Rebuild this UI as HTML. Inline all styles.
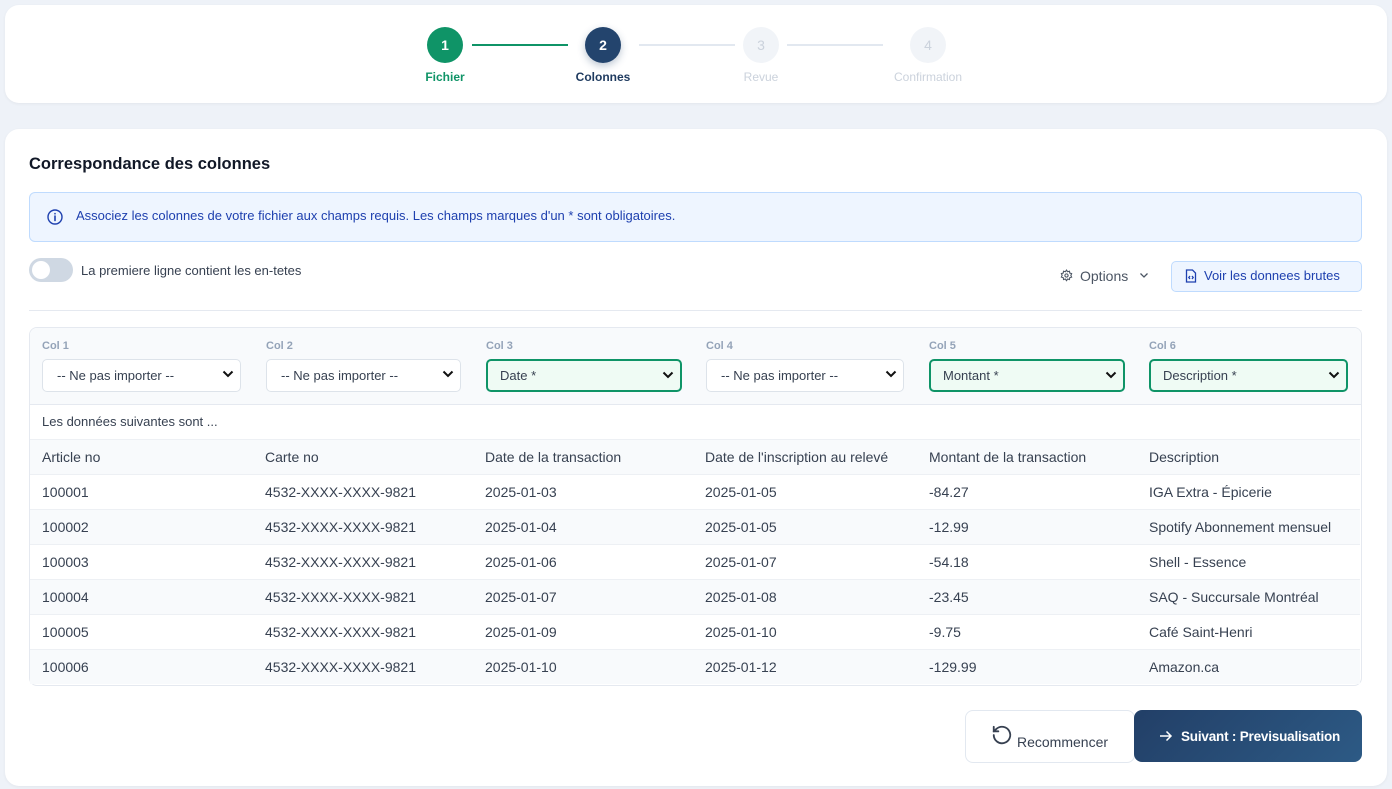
<!DOCTYPE html>
<html><head><meta charset="utf-8"><style>
*{box-sizing:border-box;margin:0;padding:0}
body{width:1392px;height:789px;background:#eef2f8;font-family:"Liberation Sans",sans-serif;color:#1f2937;position:relative;overflow:hidden}
.card{position:absolute;left:5px;width:1382px;background:#fff;border-radius:14px;box-shadow:0 1px 3px rgba(0,0,0,.05)}
.step{position:absolute;top:27px;width:36px;height:36px;border-radius:50%;color:#fff;font-weight:bold;font-size:14px;text-align:center;line-height:36px}
.lbl{position:absolute;top:70px;font-size:12px;font-weight:bold;text-align:center;width:120px}
.line{position:absolute;top:44px;height:2px}
.abs{position:absolute}
.sel{position:absolute;top:359px;height:33px;border:1.5px solid #dde3ea;border-radius:5px;background:#fff;font-size:13px;padding-left:14px;line-height:31px;color:#374151}
.sel.g{border:2px solid #0f9467;background:#effbf4;line-height:30px;padding-left:12px}
.sel svg{position:absolute;right:6px;top:10px}
.cl{position:absolute;top:340px;font-size:11px;font-weight:bold;color:#94a3b8}
.row{position:absolute;left:30px;width:1330px;height:35px;font-size:14px;line-height:35px;border-top:1px solid #edf0f4;color:#374151}
.row span{position:absolute}
.sh{background:#f8fafc}
</style></head><body>
<div class="card" style="top:5px;height:98px">
</div>
<div class="line" style="left:472px;width:96px;background:#0f9467"></div>
<div class="line" style="left:639px;width:96px;background:#e2e8f0"></div>
<div class="line" style="left:787px;width:96px;background:#e2e8f0"></div>
<div class="step" style="left:427px;background:#0f9467">1</div>
<div class="step" style="left:585px;background:#23446d;box-shadow:0 3px 8px rgba(35,68,109,.3)">2</div>
<div class="step" style="left:743px;background:#f1f4f8;color:#cbd2dc;font-weight:normal">3</div>
<div class="step" style="left:910px;background:#f1f4f8;color:#cbd2dc;font-weight:normal">4</div>
<div class="lbl" style="left:385px;color:#0f9467">Fichier</div>
<div class="lbl" style="left:543px;color:#1e3a5f">Colonnes</div>
<div class="lbl" style="left:701px;color:#cbd2dc;font-weight:normal">Revue</div>
<div class="lbl" style="left:868px;color:#cbd2dc;font-weight:normal">Confirmation</div>

<div class="card" style="top:129px;height:657px"></div>
<div class="abs" style="left:29px;top:155px;font-size:16.5px;font-weight:bold;color:#111827">Correspondance des colonnes</div>
<div class="abs" style="left:29px;top:192px;width:1333px;height:50px;background:#eef5ff;border:1px solid #bfdbfe;border-radius:6px"></div>
<svg class="abs" style="left:46px;top:208px" width="18" height="18" viewBox="0 0 18 18"><circle cx="9" cy="9" r="7" fill="none" stroke="#1e40af" stroke-width="1.4"/><path d="M9 8v4.5M9 5.6v.2" stroke="#1e40af" stroke-width="1.6" stroke-linecap="round"/></svg>
<div class="abs" style="left:76px;top:208px;font-size:13px;color:#1e40af">Associez les colonnes de votre fichier aux champs requis. Les champs marques d'un * sont obligatoires.</div>
<div class="abs" style="left:29px;top:258px;width:44px;height:24px;border-radius:12px;background:#cfd8e3"></div>
<div class="abs" style="left:32px;top:261px;width:18px;height:18px;border-radius:50%;background:#fff"></div>
<div class="abs" style="left:81px;top:263px;font-size:13px;color:#374151">La premiere ligne contient les en-tetes</div>
<svg class="abs" style="left:1060px;top:269px" width="13" height="13" viewBox="0 0 24 24" fill="none" stroke="#4b5563" stroke-width="2"><circle cx="12" cy="12" r="3"/><path d="M12 2l2 3 3.5-1 .5 3.5 3.5 1-1.5 3.5 1.5 3-3.5 1-.5 3.5-3.5-1-2 3-2-3-3.5 1-.5-3.5-3.5-1 1.5-3.5L2.5 8.5 6 7.5 6.5 4 10 5z"/></svg>
<div class="abs" style="left:1080px;top:268px;font-size:14px;color:#4b5563">Options</div>
<svg class="abs" style="left:1139px;top:272px" width="10" height="7" viewBox="0 0 10 7"><path d="M1.5 1.5l3.5 3.5 3.5-3.5" fill="none" stroke="#4b5563" stroke-width="1.3"/></svg>
<div class="abs" style="left:1171px;top:261px;width:191px;height:31px;background:#eef5ff;border:1px solid #bfdbfe;border-radius:5px"></div>
<svg class="abs" style="left:1185px;top:269px" width="12" height="14" viewBox="0 0 12 14" fill="none" stroke="#1e40af" stroke-width="1.3"><path d="M1.5 1h6l3 3v9h-9z"/><path d="M5 7l-1.2 1.5L5 10M7 7l1.2 1.5L7 10"/></svg>
<div class="abs" style="left:1204px;top:268px;font-size:13px;color:#1e40af">Voir les donnees brutes</div>
<div class="abs" style="left:29px;top:310px;width:1333px;height:1px;background:#e5e9f0"></div>

<div class="abs" style="left:29px;top:327px;width:1333px;height:359px;border:1px solid #e5e9f0;border-radius:8px;overflow:hidden;background:#fff">
<div style="height:77px;background:#f8fafc;border-bottom:1px solid #e5e9f0"></div>
</div>
<div class="cl" style="left:42px">Col 1</div><div class="cl" style="left:266px">Col 2</div><div class="cl" style="left:486px">Col 3</div><div class="cl" style="left:706px">Col 4</div><div class="cl" style="left:929px">Col 5</div><div class="cl" style="left:1149px">Col 6</div>
<div class="sel" style="left:42px;width:199px">-- Ne pas importer --<svg width="12" height="8"><path d="M1.5 1.5l4.5 4.5 4.5-4.5" fill="none" stroke="#111" stroke-width="2"/></svg></div>
<div class="sel" style="left:266px;width:195px">-- Ne pas importer --<svg width="12" height="8"><path d="M1.5 1.5l4.5 4.5 4.5-4.5" fill="none" stroke="#111" stroke-width="2"/></svg></div>
<div class="sel g" style="left:486px;width:196px">Date *<svg width="12" height="8"><path d="M1.5 1.5l4.5 4.5 4.5-4.5" fill="none" stroke="#111" stroke-width="2"/></svg></div>
<div class="sel" style="left:706px;width:198px">-- Ne pas importer --<svg width="12" height="8"><path d="M1.5 1.5l4.5 4.5 4.5-4.5" fill="none" stroke="#111" stroke-width="2"/></svg></div>
<div class="sel g" style="left:929px;width:196px">Montant *<svg width="12" height="8"><path d="M1.5 1.5l4.5 4.5 4.5-4.5" fill="none" stroke="#111" stroke-width="2"/></svg></div>
<div class="sel g" style="left:1149px;width:199px">Description *<svg width="12" height="8"><path d="M1.5 1.5l4.5 4.5 4.5-4.5" fill="none" stroke="#111" stroke-width="2"/></svg></div>

<div class="row" style="top:404px;border-top:none;font-size:13px"><span style="left:12px">Les données suivantes sont ...</span></div>
<div class="row sh" style="top:439px"><span style="left:12px">Article no</span><span style="left:235px">Carte no</span><span style="left:455px">Date de la transaction</span><span style="left:675px">Date de l'inscription au relevé</span><span style="left:899px">Montant de la transaction</span><span style="left:1119px">Description</span></div>
<div class="row" style="top:474px"><span style="left:12px">100001</span><span style="left:235px">4532-XXXX-XXXX-9821</span><span style="left:455px">2025-01-03</span><span style="left:675px">2025-01-05</span><span style="left:899px">-84.27</span><span style="left:1119px">IGA Extra - Épicerie</span></div>
<div class="row sh" style="top:509px"><span style="left:12px">100002</span><span style="left:235px">4532-XXXX-XXXX-9821</span><span style="left:455px">2025-01-04</span><span style="left:675px">2025-01-05</span><span style="left:899px">-12.99</span><span style="left:1119px">Spotify Abonnement mensuel</span></div>
<div class="row" style="top:544px"><span style="left:12px">100003</span><span style="left:235px">4532-XXXX-XXXX-9821</span><span style="left:455px">2025-01-06</span><span style="left:675px">2025-01-07</span><span style="left:899px">-54.18</span><span style="left:1119px">Shell - Essence</span></div>
<div class="row sh" style="top:579px"><span style="left:12px">100004</span><span style="left:235px">4532-XXXX-XXXX-9821</span><span style="left:455px">2025-01-07</span><span style="left:675px">2025-01-08</span><span style="left:899px">-23.45</span><span style="left:1119px">SAQ - Succursale Montréal</span></div>
<div class="row" style="top:614px"><span style="left:12px">100005</span><span style="left:235px">4532-XXXX-XXXX-9821</span><span style="left:455px">2025-01-09</span><span style="left:675px">2025-01-10</span><span style="left:899px">-9.75</span><span style="left:1119px">Café Saint-Henri</span></div>
<div class="row sh" style="top:649px"><span style="left:12px">100006</span><span style="left:235px">4532-XXXX-XXXX-9821</span><span style="left:455px">2025-01-10</span><span style="left:675px">2025-01-12</span><span style="left:899px">-129.99</span><span style="left:1119px">Amazon.ca</span></div>

<div class="abs" style="left:965px;top:710px;width:170px;height:53px;border:1px solid #e2e8f0;border-radius:8px;background:#fff"></div>
<svg class="abs" style="left:991px;top:724px" width="22" height="22" viewBox="0 0 24 24" fill="none" stroke="#374151" stroke-width="2" stroke-linecap="round"><path d="M3 12a9 9 0 1 0 3-6.7L3 8"/><path d="M3 3v5h5"/></svg>
<div class="abs" style="left:1017px;top:734px;font-size:14px;color:#374151">Recommencer</div>
<div class="abs" style="left:1134px;top:710px;width:228px;height:52px;border-radius:8px;background:linear-gradient(135deg,#223f67,#2d5a85)"></div>
<svg class="abs" style="left:1159px;top:730px" width="14" height="12" viewBox="0 0 14 12" fill="none" stroke="#fff" stroke-width="1.5"><path d="M1 6h11M7.5 1.5L12 6l-4.5 4.5"/></svg>
<div class="abs" style="left:1181px;top:729px;font-size:13.5px;color:#fff;font-weight:bold;letter-spacing:-0.2px">Suivant : Previsualisation</div>
</body></html>
